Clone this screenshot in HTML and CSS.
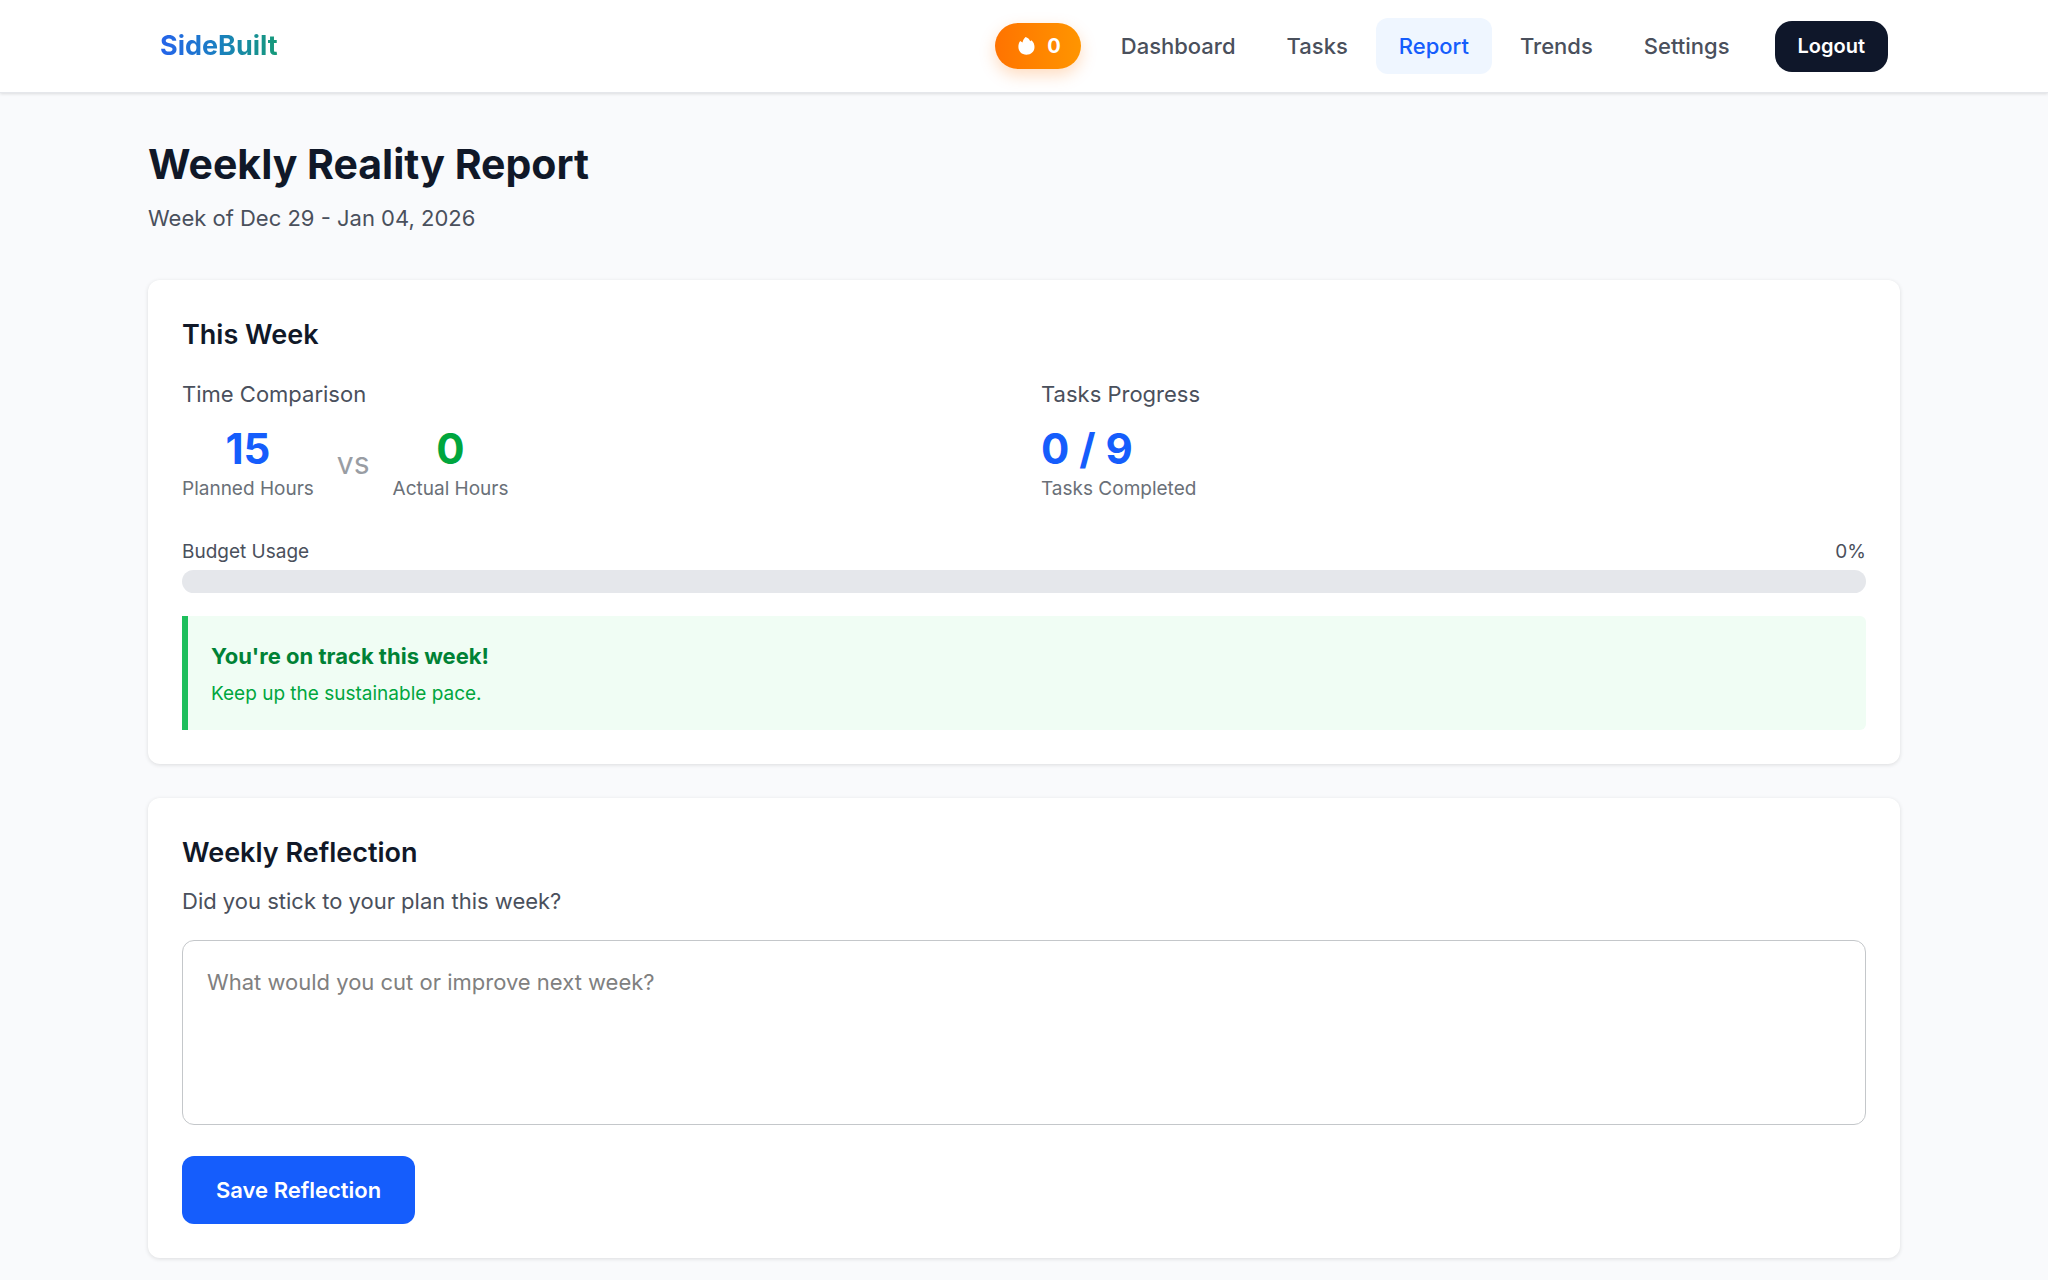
FILE: index.html
```html
<!DOCTYPE html>
<html lang="en">
<head>
    <meta charset="UTF-8">
    <meta name="viewport" content="width=device-width, initial-scale=1.0">
    <title>SideBuilt - Weekly Report</title>
    <link rel="stylesheet" href="styles.css">
</head>
<body>
    <header class="navbar">
        <div class="navbar-inner">
            <a class="logo" href="#">SideBuilt</a>
            <nav class="nav-links">
                <div class="streak">
                    <svg class="flame" viewBox="0 0 17 18" aria-hidden="true">
                        <path fill="#fff" d="M7.600 0C9.800 .7 11.400 2.200 12.200 4.200L13.400 3.200C15.600 5 16.500 7.400 16.500 10C16.500 14.600 13 17.700 8.400 17.700C3.700 17.700 .4 14.400 .4 10C.4 7.700 .9 5.500 2.200 4L4.500 5.600C4.900 3.400 5.900 1.400 7.600 0Z"/>
                    </svg>
                    <span>0</span>
                </div>
                <a class="nav-link" href="#">Dashboard</a>
                <a class="nav-link" href="#">Tasks</a>
                <a class="nav-link active" href="#">Report</a>
                <a class="nav-link" href="#">Trends</a>
                <a class="nav-link" href="#">Settings</a>
                <button type="button" class="logout-btn">Logout</button>
            </nav>
        </div>
    </header>

    <main class="container">
        <div class="page-header">
            <h1>Weekly Reality Report</h1>
            <p>Week of Dec 29 - Jan 04, 2026</p>
        </div>

        <section class="card">
            <h2>This Week</h2>
            <div class="stats">
                <div>
                    <p class="stat-title">Time Comparison</p>
                    <div class="compare">
                        <div class="stat">
                            <div class="stat-value blue">15</div>
                            <div class="stat-label">Planned Hours</div>
                        </div>
                        <div class="vs">vs</div>
                        <div class="stat">
                            <div class="stat-value green">0</div>
                            <div class="stat-label">Actual Hours</div>
                        </div>
                    </div>
                </div>
                <div>
                    <p class="stat-title">Tasks Progress</p>
                    <div class="stat-value blue">0 / 9</div>
                    <div class="stat-label">Tasks Completed</div>
                </div>
            </div>

            <div class="budget-row">
                <span id="budget-label">Budget Usage</span>
                <span>0%</span>
            </div>
            <div class="bar" role="progressbar" aria-labelledby="budget-label" aria-valuenow="0" aria-valuemin="0" aria-valuemax="100">
                <div class="bar-fill" style="width: 0%"></div>
            </div>

            <div class="alert">
                <p class="alert-title">You're on track this week!</p>
                <p class="alert-text">Keep up the sustainable pace.</p>
            </div>
        </section>

        <section class="card">
            <h2>Weekly Reflection</h2>
            <form class="reflection-form">
                <label for="reflection">Did you stick to your plan this week?</label>
                <textarea id="reflection" placeholder="What would you cut or improve next week?"></textarea>
                <button type="button" class="save-btn">Save Reflection</button>
            </form>
        </section>
    </main>
</body>
</html>
```
FILE: styles.css
```css
* {
    box-sizing: border-box;
}
body {
    font-family: Inter, "Liberation Sans", sans-serif;
    font-size: 22px;
    line-height: 34px;
    background: #f9fafc;
    margin: 0;
    color: #4a505c;
}
h1, h2, p {
    margin: 0;
}
a {
    text-decoration: none;
}

/* Navbar */
.navbar {
    background: #fff;
    border-bottom: 1px solid #e5e7eb;
    box-shadow: 0 1px 3px rgba(0,0,0,0.12);
}
.navbar-inner {
    display: flex;
    justify-content: space-between;
    align-items: center;
    max-width: 1752px;
    margin: 0 auto;
    padding: 18px 12px;
}
.logo {
    font-size: 27px;
    font-weight: 700;
    background: linear-gradient(90deg, #2563eb, #1a80c0 50%, #159a78);
    -webkit-background-clip: text;
    background-clip: text;
    color: transparent;
}
.nav-links {
    display: flex;
    align-items: center;
    gap: 5px;
}
.streak {
    display: flex;
    align-items: center;
    gap: 12px;
    margin-right: 12px;
    padding: 6px 20px 6px 23px;
    border-radius: 23px;
    background: linear-gradient(90deg, #ff7300, #ff9500);
    box-shadow: 0 6px 16px rgba(255,115,0,0.25);
    color: #fff;
    font-size: 20px;
    font-weight: 700;
}
.flame {
    width: 17px;
    height: 18px;
}
.nav-link {
    padding: 11px 23px;
    border-radius: 12px;
    color: #4a505c;
    font-weight: 500;
}
.nav-link.active {
    background: #eff6ff;
    color: #155dfc;
}
.logout-btn {
    margin-left: 17px;
    padding: 9px 23px;
    border: none;
    border-radius: 17px;
    background: #0f172a;
    color: #fff;
    font-family: inherit;
    font-size: 20px;
    font-weight: 600;
    line-height: 33px;
    cursor: pointer;
}

/* Page */
.container {
    max-width: 1752px;
    margin: 0 auto;
    padding: 46px 0 22px;
}
.page-header {
    margin-bottom: 45px;
}
h1 {
    margin-bottom: 11px;
    color: #101828;
    font-size: 41px;
    font-weight: 700;
    line-height: 51px;
}
.card {
    margin-bottom: 34px;
    padding: 34px;
    border-radius: 12px;
    background: #fff;
    box-shadow: 0 1px 4px rgba(0,0,0,0.12);
}
.card:last-child {
    margin-bottom: 0;
}
h2 {
    margin-bottom: 21px;
    color: #101828;
    font-size: 27px;
    font-weight: 600;
    line-height: 42px;
}

/* Stats */
.stats {
    display: grid;
    grid-template-columns: 1fr 1fr;
    gap: 34px;
    margin-bottom: 34px;
}
.stat-title {
    margin-bottom: 12px;
}
.compare {
    display: flex;
    align-items: center;
    gap: 23px;
}
.stat {
    text-align: center;
}
.stat-value {
    font-size: 42px;
    font-weight: 700;
    line-height: 51px;
}
.blue {
    color: #155dfc;
}
.green {
    color: #00a63e;
}
.stat-label {
    color: #6a7078;
    font-size: 19px;
    line-height: 29px;
}
.vs {
    color: #999da3;
    font-size: 30px;
}
.budget-row {
    display: flex;
    justify-content: space-between;
    margin-bottom: 4px;
    font-size: 19px;
    line-height: 29px;
}
.bar {
    height: 23px;
    margin-bottom: 23px;
    border-radius: 12px;
    background: #e5e7eb;
    overflow: hidden;
}
.bar-fill {
    height: 100%;
    background: #00c950;
}
.alert {
    padding: 23px 23px 22px;
    border-left: 6px solid #1dbf5c;
    border-radius: 0 6px 6px 0;
    background: #f0fdf4;
}
.alert-title {
    margin-bottom: 6px;
    color: #008236;
    font-weight: 700;
}
.alert-text {
    color: #00a63e;
    font-size: 19px;
    line-height: 29px;
}

/* Reflection */
.reflection-form {
    display: flex;
    flex-direction: column;
    align-items: flex-start;
    margin-top: -11px;
}
textarea {
    width: 100%;
    height: 185px;
    margin: 22px 0 31px;
    padding: 24px;
    border: 1px solid #c4c7ca;
    border-radius: 12px;
    background: #fff;
    color: #101828;
    font: inherit;
    resize: none;
}
textarea::placeholder {
    color: #808080;
}
.save-btn {
    padding: 17px 34px;
    border: none;
    border-radius: 12px;
    background: #155dfc;
    color: #fff;
    font-family: inherit;
    font-size: 22px;
    font-weight: 600;
    line-height: 34px;
    cursor: pointer;
}
```
